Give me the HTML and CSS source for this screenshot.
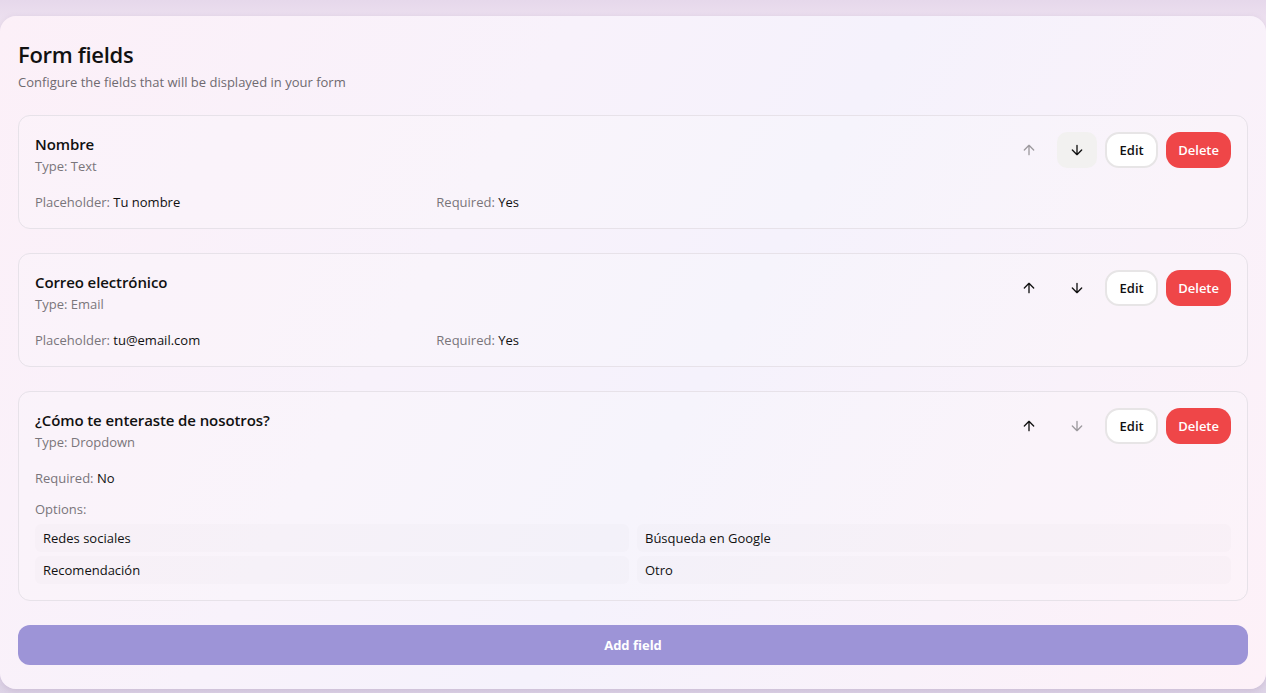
FILE: index.html
```html
<!DOCTYPE html>
<html lang="en">
<head>
<meta charset="utf-8">
<title>Form fields</title>
<link rel="stylesheet" href="styles.css">
</head>
<body>
<div class="page">
  <section class="panel">
    <h2 class="title">Form fields</h2>
    <p class="subtitle">Configure the fields that will be displayed in your form</p>

    <div class="fields">
      <div class="field">
        <div class="field-head">
          <div class="info">
            <div class="name">Nombre</div>
            <div class="type">Type: Text</div>
          </div>
          <div class="actions">
            <button class="icon-btn disabled" aria-label="Move up"><svg viewBox="0 0 24 24" width="16" height="16"><path d="M12 19V5M5 12l7-7 7 7"/></svg></button>
            <button class="icon-btn hover" aria-label="Move down"><svg viewBox="0 0 24 24" width="16" height="16"><path d="M12 5v14M19 12l-7 7-7-7"/></svg></button>
            <button class="btn edit">Edit</button>
            <button class="btn delete">Delete</button>
          </div>
        </div>
        <div class="meta">
          <div><span class="label">Placeholder:</span> Tu nombre</div>
          <div><span class="label">Required:</span> Yes</div>
        </div>
      </div>

      <div class="field">
        <div class="field-head">
          <div class="info">
            <div class="name">Correo electrónico</div>
            <div class="type">Type: Email</div>
          </div>
          <div class="actions">
            <button class="icon-btn" aria-label="Move up"><svg viewBox="0 0 24 24" width="16" height="16"><path d="M12 19V5M5 12l7-7 7 7"/></svg></button>
            <button class="icon-btn" aria-label="Move down"><svg viewBox="0 0 24 24" width="16" height="16"><path d="M12 5v14M19 12l-7 7-7-7"/></svg></button>
            <button class="btn edit">Edit</button>
            <button class="btn delete">Delete</button>
          </div>
        </div>
        <div class="meta">
          <div><span class="label">Placeholder:</span> tu@email.com</div>
          <div><span class="label">Required:</span> Yes</div>
        </div>
      </div>

      <div class="field">
        <div class="field-head">
          <div class="info">
            <div class="name">¿Cómo te enteraste de nosotros?</div>
            <div class="type">Type: Dropdown</div>
          </div>
          <div class="actions">
            <button class="icon-btn" aria-label="Move up"><svg viewBox="0 0 24 24" width="16" height="16"><path d="M12 19V5M5 12l7-7 7 7"/></svg></button>
            <button class="icon-btn disabled" aria-label="Move down"><svg viewBox="0 0 24 24" width="16" height="16"><path d="M12 5v14M19 12l-7 7-7-7"/></svg></button>
            <button class="btn edit">Edit</button>
            <button class="btn delete">Delete</button>
          </div>
        </div>
        <div class="meta">
          <div><span class="label">Required:</span> No</div>
        </div>
        <div class="options-label">Options:</div>
        <div class="options">
          <div class="option">Redes sociales</div>
          <div class="option">Búsqueda en Google</div>
          <div class="option">Recomendación</div>
          <div class="option">Otro</div>
        </div>
      </div>
    </div>

    <button class="add-btn">Add field</button>
  </section>
</div>
</body>
</html>
```

FILE: styles.css
```css
* { box-sizing: border-box; }
html, body { margin: 0; padding: 0; }
body {
  font-family: "Open Sans", "Noto Sans", Arial, sans-serif;
  color: #111111;
  background: linear-gradient(180deg, #e6d8eb 0%, #efe3f1 4%, #ede2f0 90%, #ddd3e6 100%);
  height: 693px;
  overflow: hidden;
}
.page {
  padding: 16px 0 0 0;
}
.panel {
  height: 673px;
  border-radius: 16px;
  padding: 22px 18px 24px 18px;
  background: linear-gradient(120deg, #fcf0f8 0%, #f8f2fb 35%, #f5f2fc 55%, #fdf1f8 100%);
  box-shadow: 0 2px 6px rgba(120, 90, 140, 0.18);
}
.title {
  margin: 0;
  font-size: 22px;
  line-height: 32px;
  font-weight: 600;
  letter-spacing: -0.3px;
}
.subtitle {
  margin: 2px 0 0 0;
  font-size: 13px;
  line-height: 20px;
  color: #6f6a70;
}
.fields {
  margin-top: 23px;
  display: flex;
  flex-direction: column;
  gap: 24px;
}
.field {
  border: 1px solid #e7e2e9;
  border-radius: 12px;
  padding: 16px;
  background: rgba(255, 255, 255, 0.15);
}
.field-head {
  display: flex;
  justify-content: space-between;
  align-items: flex-start;
}
.name {
  font-size: 15px;
  line-height: 24px;
  font-weight: 600;
  letter-spacing: -0.1px;
}
.type {
  font-size: 13px;
  line-height: 20px;
  color: #7a767b;
}
.actions {
  display: flex;
  gap: 8px;
  align-items: center;
}
.icon-btn {
  width: 40px;
  height: 36px;
  border: 0;
  border-radius: 10px;
  background: transparent;
  display: flex;
  align-items: center;
  justify-content: center;
  padding: 0;
  color: #111111;
}
.icon-btn svg path {
  fill: none;
  stroke: currentColor;
  stroke-width: 2;
  stroke-linecap: round;
  stroke-linejoin: round;
}
.icon-btn.disabled { color: #9d9a9e; }
.icon-btn.hover { background: #f2f1f0; }
.btn {
  height: 36px;
  border-radius: 14px;
  font-family: inherit;
  font-size: 13px;
  font-weight: 600;
}
.btn.edit {
  background: #ffffff;
  border: 2px solid #e7e5e6;
  color: #111111;
  padding: 0 12.5px;
}
.btn.delete {
  background: #ef4648;
  border: 0;
  color: #ffffff;
  padding: 0 12px;
}
.meta {
  margin-top: 16px;
  display: grid;
  grid-template-columns: repeat(3, 1fr);
  gap: 8px;
  font-size: 13px;
  line-height: 20px;
}
.label { color: #79757a; }
.options-label {
  margin-top: 11px;
  font-size: 13px;
  line-height: 20px;
  color: #79757a;
}
.options {
  margin-top: 5px;
  display: grid;
  grid-template-columns: 1fr 1fr;
  gap: 4px 8px;
}
.option {
  padding: 4px 8px;
  font-size: 13px;
  line-height: 20px;
  background: rgba(120, 100, 110, 0.02);
  border-radius: 6px;
}
.add-btn {
  display: block;
  width: 100%;
  margin-top: 24px;
  height: 40px;
  border: 0;
  border-radius: 12px;
  background: #9d94d7;
  color: #ffffff;
  font-family: inherit;
  font-size: 13px;
  font-weight: 700;
}
```
